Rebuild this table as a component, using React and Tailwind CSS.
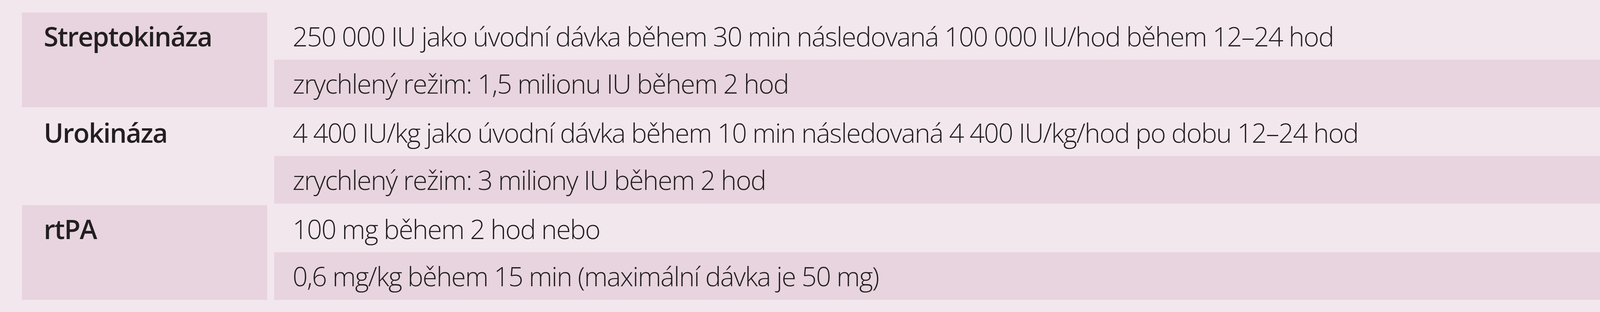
import React from 'react';

const rows = [
  {
    label: 'Streptokináza',
    shadedLabel: true,
    lines: [
      '250 000 IU jako úvodní dávka během 30 min následovaná 100 000 IU/hod během 12–24 hod',
      'zrychlený režim: 1,5 milionu IU během 2 hod',
    ],
  },
  {
    label: 'Urokináza',
    shadedLabel: false,
    lines: [
      '4 400 IU/kg jako úvodní dávka během 10 min následovaná 4 400 IU/kg/hod po dobu 12–24 hod',
      'zrychlený režim: 3 miliony IU během 2 hod',
    ],
  },
  {
    label: 'rtPA',
    shadedLabel: true,
    lines: [
      '100 mg během 2 hod nebo',
      '0,6 mg/kg během 15 min (maximální dávka je 50 mg)',
    ],
  },
];

const App = () => {
  return (
    <div
      className="w-[4248px] h-[800px] bg-[#f3e7ee] pt-[32px] pl-[56px] text-[#231f20]"
      style={{ fontFamily: '"Open Sans", "Noto Sans", sans-serif' }}
    >
      <div className="flex flex-col gap-[4px]">
        {rows.map((row) => (
          <div key={row.label} className="flex gap-[18px] h-[243px]">
            {/* Drug name */}
            <div className={`w-[628px] pl-[56px] ${row.shadedLabel ? 'bg-[#e7d4de]' : ''}`}>
              <div className="h-[121px] flex items-center text-[68px] tracking-[-2px] font-semibold leading-none">
                {row.label}
              </div>
            </div>

            {/* Dosage */}
            <div className="w-[3520px] flex flex-col">
              <div className="h-[121px] flex items-center pl-[47px] text-[68px] tracking-[-2px] font-light leading-none">
                {row.lines[0]}
              </div>
              <div className="flex-1 flex items-center pl-[47px] text-[68px] tracking-[-2px] font-light leading-none bg-[#e7d4de]">
                {row.lines[1]}
              </div>
            </div>
          </div>
        ))}
      </div>
    </div>
  );
};

export default App;
